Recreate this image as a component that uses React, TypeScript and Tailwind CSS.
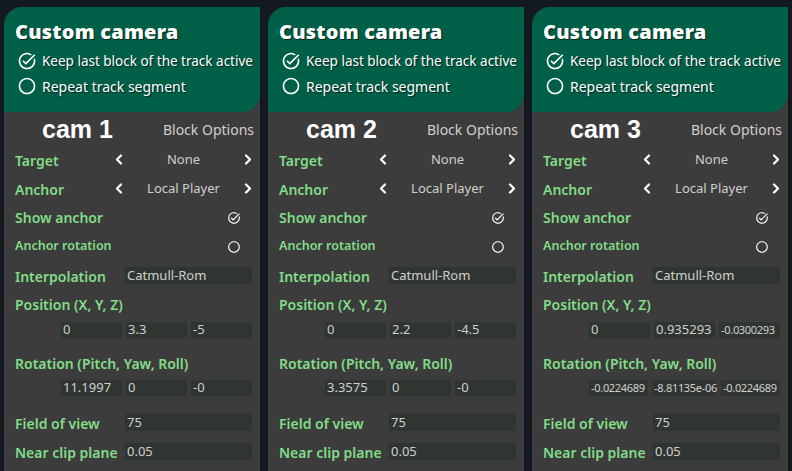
import { MdTaskAlt, MdRadioButtonUnchecked } from 'react-icons/md';

type Panel = { cam: string; pos: string[]; rot: string[] };

const panels: Panel[] = [
  { cam: 'cam 1', pos: ['0', '3.3', '-5'], rot: ['11.1997', '0', '-0'] },
  { cam: 'cam 2', pos: ['0', '2.2', '-4.5'], rot: ['3.3575', '0', '-0'] },
  { cam: 'cam 3', pos: ['0', '0.935293', '-0.0300293'], rot: ['-0.0224689', '-8.81135e-06', '-0.0224689'] },
];

const font = { fontFamily: '"Noto Sans", "DejaVu Sans", sans-serif' };

const Chevron = ({ dir }: { dir: 'left' | 'right' }) => (
  <svg width="8" height="11" viewBox="0 0 8 11" className="text-white">
    <polyline
      points={dir === 'left' ? '6,1.5 2,5.5 6,9.5' : '2,1.5 6,5.5 2,9.5'}
      fill="none"
      stroke="currentColor"
      strokeWidth="2.2"
      strokeLinecap="round"
      strokeLinejoin="round"
    />
  </svg>
);

const Label = ({ children, small }: { children: React.ReactNode; small?: boolean }) => (
  <span className={`${small ? 'text-[12.5px]' : 'text-[14px]'} font-semibold text-[#82dc88] whitespace-nowrap`}>
    {children}
  </span>
);

const Box = ({ value, className = '' }: { value: string; className?: string }) => (
  <div
    className={`h-[16px] bg-[#2f3632] flex items-center pl-[2px] overflow-visible whitespace-nowrap text-[#cfcfcf] ${
      value.length > 8 ? 'text-[11px] tracking-[-0.3px]' : 'text-[13px]'
    } ${className}`}
  >
    {value}
  </div>
);

const Selector = ({ label, value }: { label: string; value: string }) => (
  <div className="h-[29px] flex items-center pl-[11px] pr-[8px]">
    <div className="w-[100px]">
      <Label>{label}</Label>
    </div>
    <div className="flex-1 flex items-center justify-between">
      <Chevron dir="left" />
      <span className="text-[13px] text-[#cfcfcf]">{value}</span>
      <Chevron dir="right" />
    </div>
  </div>
);

const Toggle = ({ label, on, small }: { label: string; on: boolean; small?: boolean }) => (
  <div className="h-[29px] flex items-center justify-between pl-[11px] pr-[19px]">
    <Label small={small}>{label}</Label>
    {on ? (
      <MdTaskAlt size={14} className="text-white" />
    ) : (
      <MdRadioButtonUnchecked size={14} className="text-white" />
    )}
  </div>
);

const Field = ({ label, value }: { label: string; value: string }) => (
  <div className="h-[29px] flex items-center pl-[11px] pr-[8px]">
    <div className="w-[110px]">
      <Label>{label}</Label>
    </div>
    <div className="flex-1 h-[17px] bg-[#2f3632] flex items-center pl-[2px] text-[13px] text-[#cfcfcf]">
      {value}
    </div>
  </div>
);

const Triple = ({ values }: { values: string[] }) => (
  <div className="flex pl-[57px] pr-[8px] gap-[4px]">
    {values.map((v, i) => (
      <Box key={i} value={v} className="flex-1" />
    ))}
  </div>
);

const CameraPanel = ({ p }: { p: Panel }) => (
  <div className="w-[256px] shrink-0 bg-[#3c3c3c] rounded-tl-[18px] overflow-hidden">
    <div className="h-[105px] bg-[#005f47] rounded-tl-[18px] rounded-br-[18px] pl-[11px] pt-[12px] [text-shadow:1px_1px_1px_rgba(0,0,0,0.6)]">
      <div className="text-[20px] font-black text-white leading-[26px] tracking-[0.2px]">Custom camera</div>
      <div className="flex items-center h-[26px] mt-[3px] text-[13.5px] text-white">
        <MdTaskAlt size={20} className="ml-[2px] mr-[5px]" />
        Keep last block of the track active
      </div>
      <div className="flex items-center h-[26px] -mt-[1px] text-[14px] text-white">
        <MdRadioButtonUnchecked size={20} className="ml-[2px] mr-[5px]" />
        Repeat track segment
      </div>
    </div>
    <div className="h-[33px] pt-[2px] flex items-center justify-between pl-[38px] pr-[6px]">
      <span className="text-[25px] font-bold text-white" style={{ fontFamily: '"Liberation Sans", Arial, sans-serif' }}>
        {p.cam}
      </span>
      <span className="text-[14px] text-[#cfcfcf]">Block Options</span>
    </div>
    <Selector label="Target" value="None" />
    <Selector label="Anchor" value="Local Player" />
    <Toggle label="Show anchor" on />
    <Toggle label="Anchor rotation" on={false} small />
    <Field label="Interpolation" value="Catmull-Rom" />
    <div className="h-[29px] flex items-center pl-[11px]">
      <Label>Position (X, Y, Z)</Label>
    </div>
    <div className="h-[30px] pt-[3px]">
      <Triple values={p.pos} />
    </div>
    <div className="h-[29px] flex items-center pl-[11px]">
      <Label>Rotation (Pitch, Yaw, Roll)</Label>
    </div>
    <div className="h-[30px] pt-[2px]">
      <Triple values={p.rot} />
    </div>
    <Field label="Field of view" value="75" />
    <Field label="Near clip plane" value="0.05" />
    <div className="h-[20px]" />
  </div>
);

export default function App() {
  return (
    <div className="w-[792px] h-[471px] overflow-hidden bg-[#131920] flex items-start gap-[8px] px-[4px] pt-[7px]" style={font}>
      {panels.map((p, i) => (
        <CameraPanel key={i} p={p} />
      ))}
    </div>
  );
}
